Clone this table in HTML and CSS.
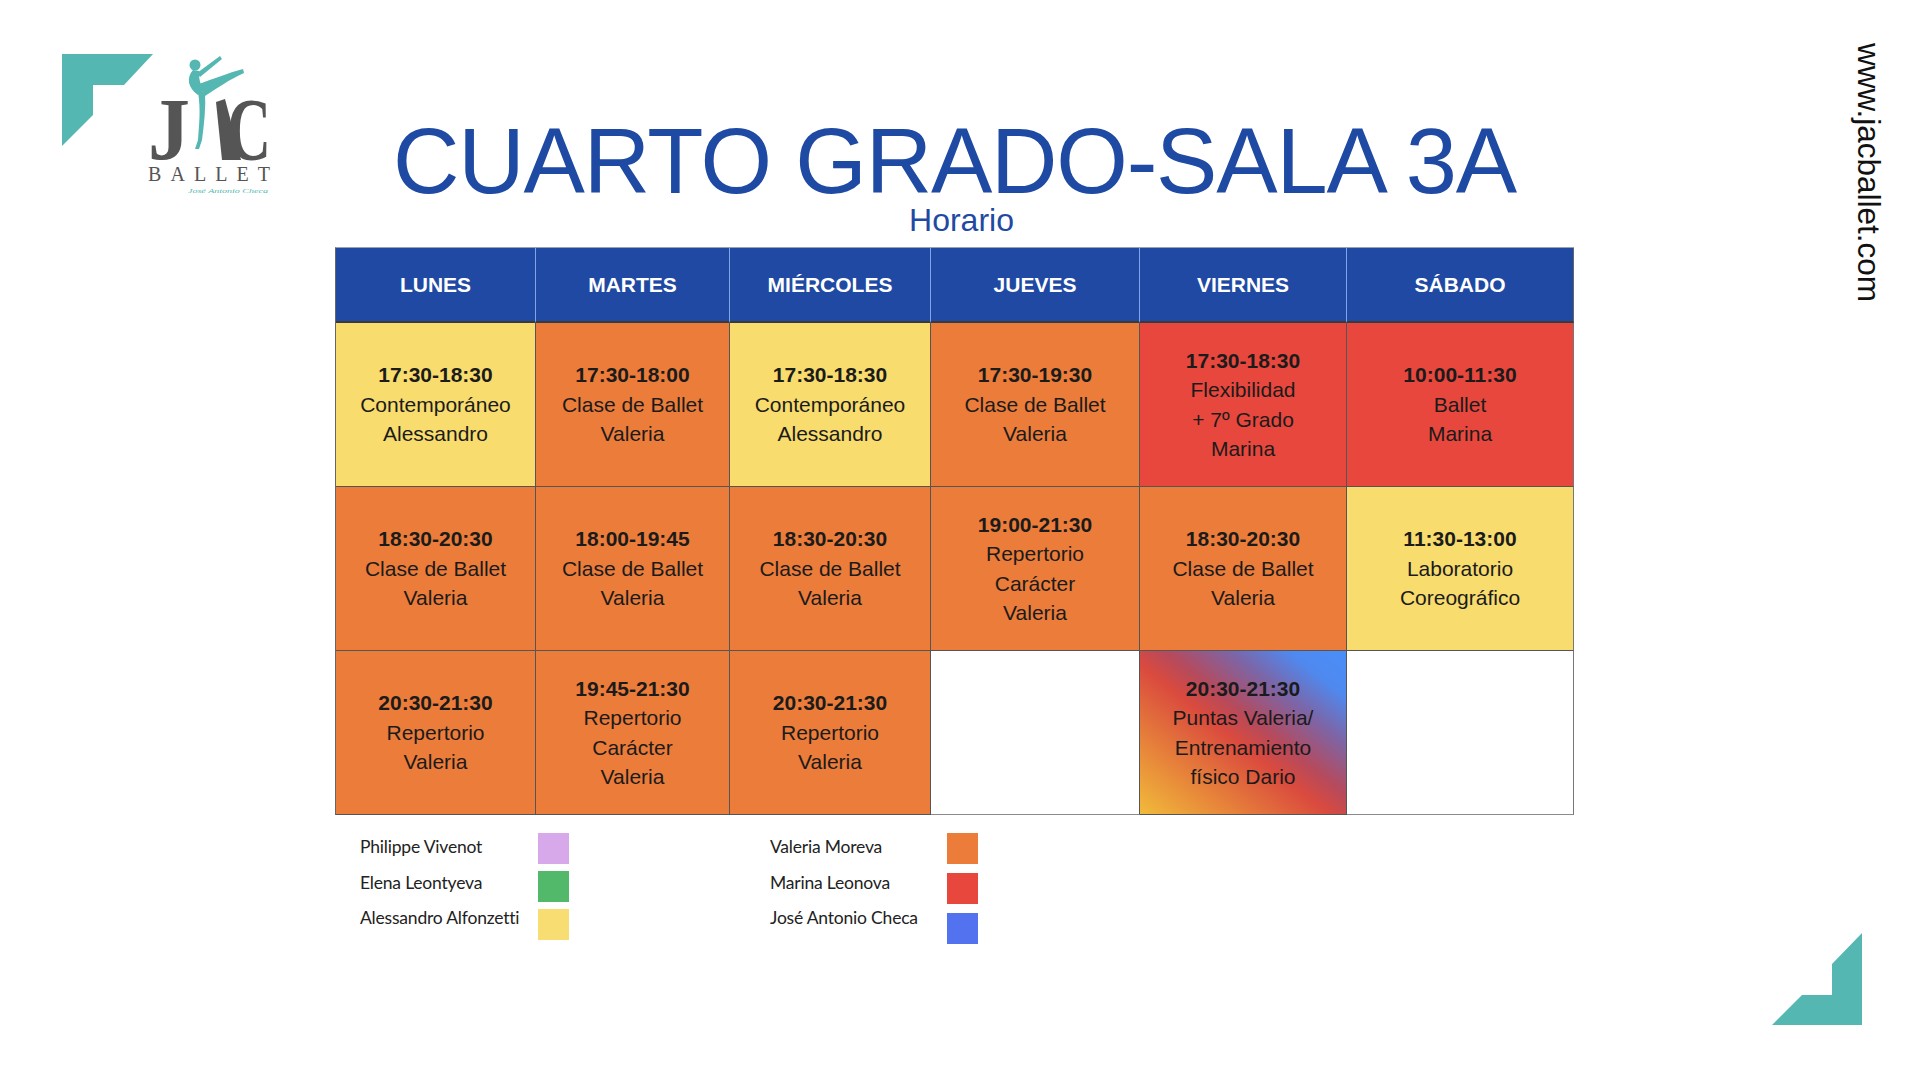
FILE: index.html
```html
<!DOCTYPE html>
<html lang="es">
<head>
<meta charset="utf-8">
<title>Cuarto Grado - Sala 3A</title>
<link rel="stylesheet" href="styles.css">
</head>
<body>
<div class="page">
  <aside class="brand">
    <svg class="logo" width="335" height="220" viewBox="0 0 335 220" aria-label="JAC Ballet">
      <polygon points="62,54 153,54 124,85 93,85 93,115 62,146" class="teal"/>
      <text x="148" y="159" class="logo-letter" textLength="42" lengthAdjust="spacingAndGlyphs">J</text>
      <polygon points="216,102 225,99 241,160 222,160" class="gray"/>
      <text x="227" y="159" class="logo-letter" textLength="44" lengthAdjust="spacingAndGlyphs">C</text>
      <g class="teal">
        <circle cx="195" cy="65" r="5.5"/>
        <path d="M193 70 C 186 78, 188 88, 198 95 L 205 90 C 199 84, 199 77, 199 71 Z"/>
        <path d="M197 73 L 220 56 L 222 59 L 200 77 Z"/>
        <path d="M199 84 C 213 79, 228 73, 243 69 L 244 73 C 230 79, 216 89, 205 96 Z"/>
        <path d="M198 92 C 201 110, 199 125, 198 140 L 195 149 L 199 149 L 202 140 C 204 124, 206 108, 205 92 Z"/>
      </g>
      <text x="148" y="181" class="logo-ballet" textLength="122" lengthAdjust="spacing">BALLET</text>
      <text x="188" y="193" class="logo-script" textLength="80" lengthAdjust="spacingAndGlyphs">José Antonio Checa</text>
    </svg>
  </aside>

  <main class="content">
    <h1 class="title">CUARTO GRADO-SALA 3A</h1>
    <p class="subtitle">Horario</p>

    <div class="schedule">
      <div class="day">LUNES</div>
      <div class="day">MARTES</div>
      <div class="day">MIÉRCOLES</div>
      <div class="day">JUEVES</div>
      <div class="day">VIERNES</div>
      <div class="day day--last">SÁBADO</div>

      <div class="slot slot--yellow"><span class="time">17:30-18:30</span><span>Contemporáneo</span><span>Alessandro</span></div>
      <div class="slot slot--orange"><span class="time">17:30-18:00</span><span>Clase de Ballet</span><span>Valeria</span></div>
      <div class="slot slot--yellow"><span class="time">17:30-18:30</span><span>Contemporáneo</span><span>Alessandro</span></div>
      <div class="slot slot--orange"><span class="time">17:30-19:30</span><span>Clase de Ballet</span><span>Valeria</span></div>
      <div class="slot slot--red"><span class="time">17:30-18:30</span><span>Flexibilidad</span><span>+ 7º Grado</span><span>Marina</span></div>
      <div class="slot slot--red"><span class="time">10:00-11:30</span><span>Ballet</span><span>Marina</span></div>

      <div class="slot slot--orange"><span class="time">18:30-20:30</span><span>Clase de Ballet</span><span>Valeria</span></div>
      <div class="slot slot--orange"><span class="time">18:00-19:45</span><span>Clase de Ballet</span><span>Valeria</span></div>
      <div class="slot slot--orange"><span class="time">18:30-20:30</span><span>Clase de Ballet</span><span>Valeria</span></div>
      <div class="slot slot--orange"><span class="time">19:00-21:30</span><span>Repertorio</span><span>Carácter</span><span>Valeria</span></div>
      <div class="slot slot--orange"><span class="time">18:30-20:30</span><span>Clase de Ballet</span><span>Valeria</span></div>
      <div class="slot slot--yellow"><span class="time">11:30-13:00</span><span>Laboratorio</span><span>Coreográfico</span></div>

      <div class="slot slot--orange"><span class="time">20:30-21:30</span><span>Repertorio</span><span>Valeria</span></div>
      <div class="slot slot--orange"><span class="time">19:45-21:30</span><span>Repertorio</span><span>Carácter</span><span>Valeria</span></div>
      <div class="slot slot--orange"><span class="time">20:30-21:30</span><span>Repertorio</span><span>Valeria</span></div>
      <div class="slot slot--empty"></div>
      <div class="slot slot--mixed"><span class="time">20:30-21:30</span><span>Puntas Valeria/</span><span>Entrenamiento</span><span>físico Dario</span></div>
      <div class="slot slot--empty"></div>
    </div>

    <div class="legend">
      <div class="legend-group">
        <ul class="legend-names">
          <li>Philippe Vivenot</li>
          <li>Elena Leontyeva</li>
          <li>Alessandro Alfonzetti</li>
        </ul>
        <div class="legend-swatches">
          <span class="swatch swatch--lilac"></span>
          <span class="swatch swatch--green"></span>
          <span class="swatch swatch--yellow"></span>
        </div>
      </div>
      <div class="legend-group legend-group--right">
        <ul class="legend-names">
          <li>Valeria Moreva</li>
          <li>Marina Leonova</li>
          <li>José Antonio Checa</li>
        </ul>
        <div class="legend-swatches legend-swatches--wide">
          <span class="swatch swatch--orange"></span>
          <span class="swatch swatch--red"></span>
          <span class="swatch swatch--blue"></span>
        </div>
      </div>
    </div>
  </main>

  <aside class="site">
    <span class="url">www.jacballet.com</span>
  </aside>

  <svg class="corner" width="91" height="92" viewBox="0 0 91 92" aria-hidden="true">
    <polygon points="90,0 90,92 0,92 30,62 60,62 60,31" class="teal"/>
  </svg>
</div>
</body>
</html>
```

FILE: styles.css
```css
* { box-sizing: border-box; }

html, body {
  margin: 0;
  padding: 0;
  background: #ffffff;
}

body {
  font-family: "Liberation Sans", Arial, sans-serif;
  color: #1b1b1b;
}

.page {
  position: relative;
  width: 1920px;
  height: 1080px;
  display: grid;
  grid-template-columns: 335px 1239px 1fr;
  overflow: hidden;
}

/* ---------- logo ---------- */
.brand { position: relative; }
.logo { display: block; }
.teal { fill: #55b7b2; }
.gray { fill: #555555; }
.logo-letter {
  font-family: "Liberation Serif", "Times New Roman", serif;
  font-weight: 700;
  font-size: 88px;
  fill: #555555;
}
.logo-ballet {
  font-family: "Liberation Serif", "Times New Roman", serif;
  font-size: 20px;
  fill: #555555;
}
.logo-script {
  font-family: "Liberation Serif", serif;
  font-style: italic;
  font-size: 7px;
  fill: #55b7b2;
}

/* ---------- main ---------- */
.content {
  padding-top: 115px;
}

.title {
  margin: 0;
  font-family: "Liberation Sans", Arial, sans-serif;
  font-weight: 400;
  font-size: 92px;
  line-height: 92px;
  letter-spacing: -1.2px;
  text-align: center;
  color: #1f4aa3;
  white-space: nowrap;
}

.subtitle {
  margin: -3px 0 0;
  padding-left: 14px;
  font-size: 32px;
  line-height: 32px;
  text-align: center;
  color: #1f4aa3;
}

/* ---------- schedule ---------- */
.schedule {
  margin-top: 11px;
  display: grid;
  grid-template-columns: 200px 194px 201px 209px 207px 227px;
  grid-template-rows: 75px 164px 164px 164px;
  width: 1239px;
  border-left: 1px solid #666666;
  border-top: 1px solid #9aa2b0;
}

.day {
  display: flex;
  align-items: center;
  justify-content: center;
  background: #1f49a3;
  color: #ffffff;
  font-weight: 700;
  font-size: 21px;
  border-right: 1px solid #7ea6e6;
  border-bottom: 2px solid #3a3a3a;
}
.day--last { border-right: 1.5px solid #666666; }

.slot {
  display: flex;
  flex-direction: column;
  align-items: center;
  justify-content: center;
  text-align: center;
  font-size: 21px;
  line-height: 29.5px;
  color: #1b1b1b;
  border-right: 1.5px solid #555555;
  border-bottom: 1.5px solid #555555;
}
.slot:nth-child(6n) { border-right-color: #777777; }

.time { font-weight: 700; }

.slot--yellow { background: #f8dc6e; }
.slot--orange { background: #ec7c3a; }
.slot--red { background: #e8473d; }
.slot--empty { background: #ffffff; border-bottom-color: #8a8a8a; }
.slot--mixed {
  background: linear-gradient(to top right,
    #f1bb3a 0%,
    #e7853a 22%,
    #da4a3e 46%,
    #b64a5c 56%,
    #7b66a8 72%,
    #4f89ef 86%,
    #4a8ef8 100%);
}

/* ---------- legend ---------- */
.legend {
  display: flex;
  gap: 201px;
  margin-top: 14px;
  padding-left: 25px;
}

.legend-group {
  display: flex;
  align-items: flex-start;
}

.legend-names {
  list-style: none;
  margin: 0;
  padding: 0;
  width: 178px;
  font-family: "Lato", "Liberation Sans", sans-serif;
  font-size: 17.5px;
  line-height: 35.5px;
  letter-spacing: -0.2px;
  color: #222222;
  white-space: nowrap;
}
.legend-group--right .legend-names { width: 177px; }

.legend-swatches {
  display: flex;
  flex-direction: column;
  gap: 7px;
  margin-top: 4px;
}
.legend-swatches--wide { gap: 9px; }

.swatch {
  display: block;
  width: 31px;
  height: 31px;
}
.swatch--lilac { background: #d8a9ea; }
.swatch--green { background: #52b86a; }
.swatch--yellow { background: #f8dd72; }
.swatch--orange { background: #ec7c3a; }
.swatch--red { background: #e8473d; }
.swatch--blue { background: #5272f0; }

/* ---------- site url ---------- */
.site {
  padding-top: 43px;
  padding-left: 279px;
}
.url {
  display: block;
  writing-mode: vertical-rl;
  font-family: "Liberation Sans", Arial, sans-serif;
  font-size: 31.5px;
  line-height: 31px;
  color: #111111;
  white-space: nowrap;
}

/* ---------- decorative corner ---------- */
.corner {
  position: absolute;
  left: 1772px;
  top: 933px;
}
```
